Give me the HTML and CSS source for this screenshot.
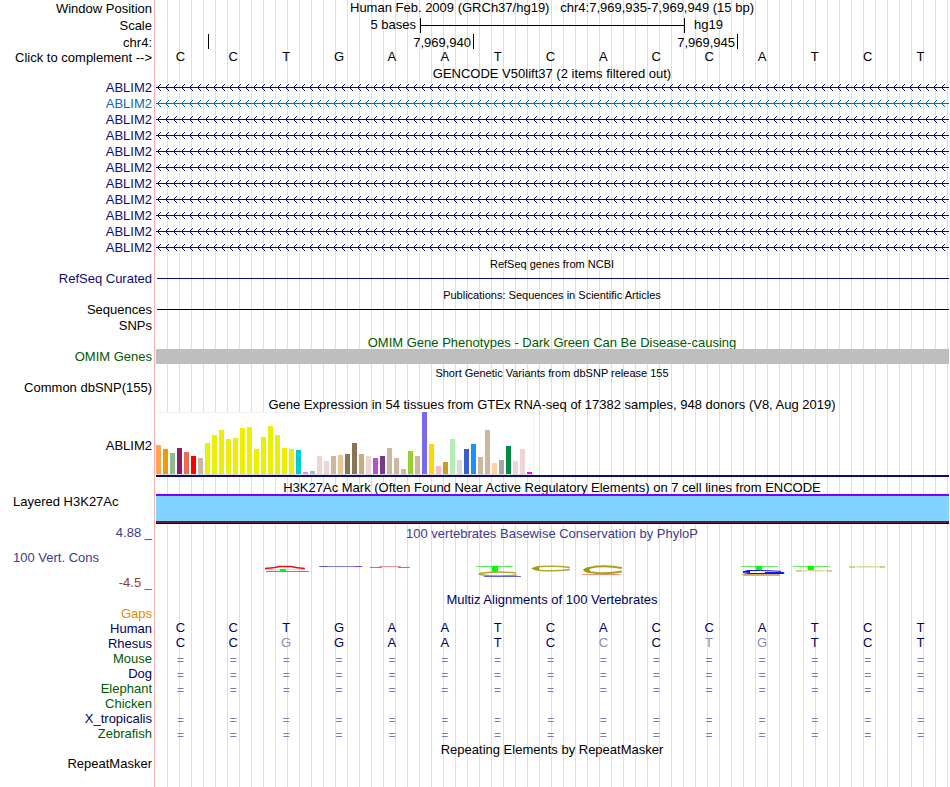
FILE: index.html
```html
<!DOCTYPE html>
<html lang="en">
<head>
<meta charset="utf-8">
<title>Genome Browser chr4:7,969,935-7,969,949</title>
<link rel="stylesheet" href="styles.css">
</head>
<body>
<svg class="defs" aria-hidden="true">
  <defs>
    <pattern id="arrows" width="8" height="16" patternUnits="userSpaceOnUse">
      <path d="M0 7h8v1H0zM2 6h1v1H2zM2 8h1v1H2zM3 5h1v1H3zM3 9h1v1H3zM4 4h1v1H4zM4 10h1v1H4z" fill="#0c0c78"/>
    </pattern>
    <pattern id="arrows-blue" width="8" height="16" patternUnits="userSpaceOnUse">
      <path d="M0 7h8v1H0zM2 6h1v1H2zM2 8h1v1H2zM3 5h1v1H3zM3 9h1v1H3zM4 4h1v1H4zM4 10h1v1H4z" fill="#0c6cb0"/>
    </pattern>
  </defs>
</svg>
<main class="browser">
  <div class="row head"><div class="label">Window Position</div><h1 class="title">Human Feb. 2009 (GRCh37/hg19) &nbsp; chr4:7,969,935-7,969,949 (15 bp)</h1></div>
  <div class="row scale-row"><div class="label">Scale</div>
    <div class="scale"><span class="scale-size">5 bases</span><span class="scale-bar"></span><span class="scale-db">hg19</span></div></div>
  <div class="row head"><div class="label">chr4:</div>
    <div class="ruler"><span class="tick"></span><span class="tick">7,969,940</span><span class="tick">7,969,945</span></div></div>
  <div class="row"><div class="label">Click to complement --&gt;</div>
    <div class="bases"><span>C</span><span>C</span><span>T</span><span>G</span><span>A</span><span>A</span><span>T</span><span>C</span><span>A</span><span>C</span><span>C</span><span>A</span><span>T</span><span>C</span><span>T</span></div></div>

  <div class="row"><h2 class="title">GENCODE V50lift37 (2 items filtered out)</h2></div>
  <div class="row tall navy"><div class="label">ABLIM2</div><svg class="gene"><rect width="100%" height="16" fill="url(#arrows)"/></svg></div>
  <div class="row tall blue"><div class="label">ABLIM2</div><svg class="gene"><rect width="100%" height="16" fill="url(#arrows-blue)"/></svg></div>
  <div class="row tall navy"><div class="label">ABLIM2</div><svg class="gene"><rect width="100%" height="16" fill="url(#arrows)"/></svg></div>
  <div class="row tall navy"><div class="label">ABLIM2</div><svg class="gene"><rect width="100%" height="16" fill="url(#arrows)"/></svg></div>
  <div class="row tall navy"><div class="label">ABLIM2</div><svg class="gene"><rect width="100%" height="16" fill="url(#arrows)"/></svg></div>
  <div class="row tall navy"><div class="label">ABLIM2</div><svg class="gene"><rect width="100%" height="16" fill="url(#arrows)"/></svg></div>
  <div class="row tall navy"><div class="label">ABLIM2</div><svg class="gene"><rect width="100%" height="16" fill="url(#arrows)"/></svg></div>
  <div class="row tall navy"><div class="label">ABLIM2</div><svg class="gene"><rect width="100%" height="16" fill="url(#arrows)"/></svg></div>
  <div class="row tall navy"><div class="label">ABLIM2</div><svg class="gene"><rect width="100%" height="16" fill="url(#arrows)"/></svg></div>
  <div class="row tall navy"><div class="label">ABLIM2</div><svg class="gene"><rect width="100%" height="16" fill="url(#arrows)"/></svg></div>
  <div class="row tall navy"><div class="label">ABLIM2</div><svg class="gene"><rect width="100%" height="16" fill="url(#arrows)"/></svg></div>

  <div class="row"><h2 class="title small">RefSeq genes from NCBI</h2></div>
  <div class="row navy"><div class="label">RefSeq Curated</div><div class="line"></div></div>
  <div class="row tall"><h2 class="title small">Publications: Sequences in Scientific Articles</h2></div>
  <div class="row tall"><div class="label">Sequences</div><div class="line"></div></div>
  <div class="row tall"><div class="label">SNPs</div></div>
  <div class="row green"><h2 class="title">OMIM Gene Phenotypes - Dark Green Can Be Disease-causing</h2></div>
  <div class="row green"><div class="label">OMIM Genes</div><div class="block"></div></div>
  <div class="row tall"><h2 class="title small">Short Genetic Variants from dbSNP release 155</h2></div>
  <div class="row tall"><div class="label">Common dbSNP(155)</div></div>
  <div class="row tall"><h2 class="title">Gene Expression in 54 tissues from GTEx RNA-seq of 17382 samples, 948 donors (V8, Aug 2019)</h2></div>

  <div class="row gtex-row"><div class="label">ABLIM2</div>
    <div class="gtex"><div class="bars">
      <i class="adipose" style="height:29px"></i><i class="adipose-v" style="height:25px"></i><i class="adrenal" style="height:21px"></i><i class="aorta" style="height:26px"></i><i class="coronary" style="height:22px"></i><i class="tibial" style="height:18px"></i><i class="tan" style="height:16px"></i>
      <i class="brain" style="height:31px"></i><i class="brain" style="height:39px"></i><i class="brain" style="height:44px"></i><i class="brain" style="height:35px"></i><i class="brain" style="height:36px"></i><i class="brain" style="height:46px"></i><i class="brain" style="height:47px"></i><i class="brain" style="height:25px"></i><i class="brain" style="height:37px"></i><i class="brain" style="height:48px"></i><i class="brain" style="height:39px"></i><i class="brain" style="height:26px"></i><i class="brain" style="height:25px"></i>
      <i class="breast" style="height:24px"></i><i class="lymph" style="height:2px"></i><i class="fibro" style="height:3px"></i><i class="rose" style="height:18px"></i><i class="rose" style="height:13px"></i><i class="tan" style="height:18px"></i><i class="colon" style="height:19px"></i><i class="esoph" style="height:20px"></i><i class="esoph" style="height:31px"></i><i class="mucosa" style="height:20px"></i><i class="rose" style="height:18px"></i><i class="heart" style="height:16px"></i><i class="heart-lv" style="height:18px"></i>
      <i class="tan" style="height:26px"></i><i class="tan" style="height:16px"></i><i class="tan" style="height:5px"></i><i class="lung" style="height:23px"></i><i class="tan" style="height:18px"></i><i class="muscle" style="height:62px"></i><i class="nerve" style="height:30px"></i><i class="ovary" style="height:8px"></i><i class="pancreas" style="height:12px"></i><i class="pituitary" style="height:35px"></i><i class="prostate" style="height:14px"></i><i class="skin" style="height:25px"></i><i class="skin-leg" style="height:30px"></i>
      <i class="tan" style="height:17px"></i><i class="tan" style="height:44px"></i><i class="stomach" style="height:11px"></i><i class="testis" style="height:14px"></i><i class="thyroid" style="height:28px"></i><i class="rose" style="height:13px"></i><i class="rose" style="height:25px"></i><i class="blood" style="height:2px"></i>
    </div></div></div>

  <div class="row"><h2 class="title">H3K27Ac Mark (Often Found Near Active Regulatory Elements) on 7 cell lines from ENCODE</h2></div>
  <div class="row"><div class="label left">Layered H3K27Ac</div><div class="histone"></div></div>

  <div class="row cons">
    <div class="axis"><span>4.88 _</span><span class="axis-name">100 Vert. Cons</span><span class="axis-min">-4.5 _</span></div>
    <div class="cons-data">
      <h2 class="title">100 vertebrates Basewise Conservation by PhyloP</h2>
      <div class="logos">
        <span></span><span></span>
        <svg viewBox="0 0 53 14"><path d="M5 5.500h40" stroke="#b8f0b8"/><path d="M5 4.500Q14 4 20 2.500H31Q37 4 45 4.500" stroke="#f01010" stroke-width="1.500" fill="none"/><path d="M20 5h6v2h-6z" fill="#0f0"/><path d="M6 7.500h43" stroke="#7878f0"/></svg>
        <svg viewBox="0 0 53 14"><path d="M6 2.500h43" stroke="#8080f0"/><path d="M8 2.500h7M42 2.500h7" stroke="#5050e0"/></svg>
        <svg viewBox="0 0 53 14"><path d="M5 3.500h12M33 3.500h12" stroke="#f06060"/><path d="M14 2.500h22" stroke="#f09090"/></svg>
        <span></span>
        <svg viewBox="0 0 53 14"><path d="M5 2.500h37" stroke="#50f050"/><path d="M21 2h6v6h-6z" fill="#0f0"/><path d="M45 9Q26 7 12 9Q4 10 12 11Q28 13 46 11" stroke="#b0a830" stroke-width="1.500" fill="none"/><path d="M13 12.500h37" stroke="#6060d0"/></svg>
        <svg viewBox="0 0 53 14"><path d="M46 3.500Q33 1.500 17 2.500Q1 4.500 17 6.500Q33 7.500 46 5.500" stroke="#b0a830" stroke-width="1.500" fill="none"/><path d="M7 4.500l8-2v4z" fill="#a09800"/></svg>
        <svg viewBox="0 0 53 14"><path d="M5 10.500h39" stroke="#f09080"/><path d="M45 4Q33 1.500 20 2.500Q-4 6 20 9Q33 10 45 7.500" stroke="#a8a018" stroke-width="2" fill="none"/><path d="M6 6q2-3 9-3-5 3 0 6-7 0-9-3z" fill="#a09800"/></svg>
        <span></span><span></span>
        <svg viewBox="0 0 53 14"><path d="M5 2.500h37" stroke="#60f060"/><path d="M20 2h6v4h-6z" fill="#0f0"/><path d="M6 10.500h38" stroke="#d0b060"/><path d="M7 11.500h37" stroke="#f0a090"/><path d="M45 7.500Q37 6.500 14 6.500Q1 8 12 9.500H48V8.500H29" stroke="#1010f0" fill="none"/><path d="M6 8l8-2v3z" fill="#00f"/></svg>
        <svg viewBox="0 0 53 14"><path d="M5 2.500h37" stroke="#60f060"/><path d="M20 2h6v4h-6z" fill="#0f0"/><path d="M7 7q20-2 40 0-20 1-40 0z" fill="#d8d490"/><path d="M8 7h6M39 7h5" stroke="#b8b040"/></svg>
        <svg viewBox="0 0 53 14"><path d="M7 3q20-2 40 0-20 1-40 0z" fill="#d8d490"/><path d="M8 3h6M39 3h5" stroke="#b8b040"/></svg>
        <span></span>
      </div>
    </div>
  </div>

  <div class="row ink"><h2 class="title">Multiz Alignments of 100 Vertebrates</h2></div>
  <div class="row"><div class="label gaps">Gaps</div></div>
  <div class="row ink"><div class="label">Human</div><div class="bases"><span>C</span><span>C</span><span>T</span><span>G</span><span>A</span><span>A</span><span>T</span><span>C</span><span>A</span><span>C</span><span>C</span><span>A</span><span>T</span><span>C</span><span>T</span></div></div>
  <div class="row ink"><div class="label">Rhesus</div><div class="bases"><span>C</span><span>C</span><span class="diff">G</span><span>G</span><span>A</span><span>A</span><span>T</span><span>C</span><span class="diff">C</span><span>C</span><span class="diff">T</span><span class="diff">G</span><span>T</span><span>C</span><span>T</span></div></div>
  <div class="row green"><div class="label">Mouse</div><div class="bases same"><span>=</span><span>=</span><span>=</span><span>=</span><span>=</span><span>=</span><span>=</span><span>=</span><span>=</span><span>=</span><span>=</span><span>=</span><span>=</span><span>=</span><span>=</span></div></div>
  <div class="row ink"><div class="label">Dog</div><div class="bases same"><span>=</span><span>=</span><span>=</span><span>=</span><span>=</span><span>=</span><span>=</span><span>=</span><span>=</span><span>=</span><span>=</span><span>=</span><span>=</span><span>=</span><span>=</span></div></div>
  <div class="row green"><div class="label">Elephant</div><div class="bases same"><span>=</span><span>=</span><span>=</span><span>=</span><span>=</span><span>=</span><span>=</span><span>=</span><span>=</span><span>=</span><span>=</span><span>=</span><span>=</span><span>=</span><span>=</span></div></div>
  <div class="row green"><div class="label">Chicken</div></div>
  <div class="row ink"><div class="label">X_tropicalis</div><div class="bases same"><span>=</span><span>=</span><span>=</span><span>=</span><span>=</span><span>=</span><span>=</span><span>=</span><span>=</span><span>=</span><span>=</span><span>=</span><span>=</span><span>=</span><span>=</span></div></div>
  <div class="row green"><div class="label">Zebrafish</div><div class="bases same"><span>=</span><span>=</span><span>=</span><span>=</span><span>=</span><span>=</span><span>=</span><span>=</span><span>=</span><span>=</span><span>=</span><span>=</span><span>=</span><span>=</span><span>=</span></div></div>
  <div class="row"><h2 class="title">Repeating Elements by RepeatMasker</h2></div>
  <div class="row"><div class="label">RepeatMasker</div></div>
</main>
</body>
</html>
```
FILE: styles.css
```css
* { box-sizing: border-box; }

body {
  margin: 0;
  background: #fff;
  color: #000;
  font: 13px/15px "Liberation Sans", Arial, sans-serif;
}

.defs { position: absolute; width: 0; height: 0; }

/* Pink edge of the data area, then a guide line every 12px */
.browser {
  min-height: 100vh;
  background:
    linear-gradient(#ffb0b0, #ffb0b0) 154px 0 / 1px 100% no-repeat,
    repeating-linear-gradient(to right, transparent 0 11px, #dcdcf8 11px 12px) 156px 0 / 100% 100% no-repeat;
}

.row {
  display: grid;
  grid-template-columns: 154px minmax(0, 1fr);
  min-height: 15px;
}
.tall, .head { min-height: 16px; }
.scale-row { min-height: 18px; }

.label {
  align-self: center;
  padding-right: 2px;
  text-align: right;
  white-space: nowrap;
}
.tall .label { align-self: start; }
.label.left { align-self: start; padding-left: 13px; text-align: left; }

.title {
  grid-column: 2;
  align-self: start;
  margin: 0;
  font-size: 13px;
  font-weight: normal;
  text-align: center;
  white-space: nowrap;
}
h2.title { padding-top: 2px; line-height: 13px; }
h2.small { align-self: center; font-size: 11px; }

.navy { color: #0c0c78; }
.blue { color: #0c6cb0; }
.green { color: #005a00; }
.ink { color: #000064; }
.gaps { color: #e68a00; }

.scale { display: grid; grid-template-columns: 266fr 265fr 265fr; align-items: center; line-height: 14px; }
.scale-size { padding-right: 4px; text-align: right; }
.scale-bar {
  height: 15px;
  border: solid #000;
  border-width: 0 1px;
  background: linear-gradient(#000, #000) 0 50% / 100% 1px no-repeat;
}
.scale-db { padding-left: 9px; }

.ruler { display: grid; grid-template-columns: 55fr 265fr 264fr 212fr; align-items: start; }
.tick { height: 15px; padding-right: 2px; border-right: 1px solid #000; line-height: 18px; text-align: right; }

.bases {
  display: grid;
  grid-template-columns: repeat(15, 1fr);
  padding-right: 3px;
  line-height: 14px;
  text-align: center;
}
.diff { color: #8c8cb8; }
.same { height: 15px; color: #7c7cb0; font-size: 12px; line-height: 18px; }

.gene { display: block; width: calc(100% - 3px); height: 16px; margin-left: 2px; }
.line { height: 1px; margin: 7px 1px 0 3px; background: currentColor; }
.block { margin: 0 1px 0 2px; background: #bebebe; }

.gtex-row { min-height: 67px; }
.gtex { align-self: start; margin: 0 1px 0 2px; border-bottom: 2px solid #0c0c78; }
.bars {
  display: flex;
  align-items: flex-end;
  gap: 2px;
  width: max-content;
  height: 63px;
  background: #fff;
  box-shadow: inset -1px 1px #f2f2f2;
  border-bottom: 1px solid #dcdcdc;
}
.bars i { width: 5px; }
.bars i:last-child { margin-right: 2px; }
.adipose { background: #ffa54f; }
.adipose-v { background: #ee9a00; }
.adrenal { background: #8fbc8f; }
.aorta { background: #8b1c62; }
.coronary { background: #ee6a50; }
.tibial { background: #ff0000; }
.tan { background: #cdb79e; }
.brain { background: #eeee00; }
.breast { background: #00cdcd; }
.lymph { background: #ee82ee; }
.fibro { background: #9ac0cd; }
.rose { background: #eed5d2; }
.colon { background: #eec591; }
.esoph { background: #8b7355; }
.mucosa { background: #cdaa7d; }
.heart { background: #b452cd; }
.heart-lv { background: #7a378b; }
.lung { background: #9acd32; }
.muscle { background: #7b68ee; }
.nerve { background: #ffd700; }
.ovary { background: #ffb6c1; }
.pancreas { background: #cd9b1d; }
.pituitary { background: #b4eeb4; }
.prostate { background: #d9d9d9; }
.skin { background: #3a5fcd; }
.skin-leg { background: #1e90ff; }
.stomach { background: #ffd39b; }
.testis { background: #a6a6a6; }
.thyroid { background: #008b45; }
.blood { background: #ff00ff; }

.histone {
  height: 30px;
  margin: 0 1px 0 2px;
  border-top: 2px solid #8000ff;
  border-bottom: 1px solid #000;
  background: linear-gradient(#80d4ff, #80d4ff) 0 0 / 100% 25px no-repeat, #701038;
}

.cons { color: #3c3c8c; }
.axis {
  display: flex;
  flex-direction: column;
  gap: 10px;
  padding: 1px 2px 0 13px;
  text-align: right;
}
.axis-name { text-align: left; }
.axis-min { color: #8c3c3c; }
.cons-data { display: flex; flex-direction: column; gap: 24px; min-height: 67px; padding-top: 1px; }
.cons-data .title { align-self: stretch; }
.logos { display: grid; grid-template-columns: repeat(15, 1fr); padding-right: 3px; }
.logos svg { display: block; width: 100%; height: 14px; }
```
